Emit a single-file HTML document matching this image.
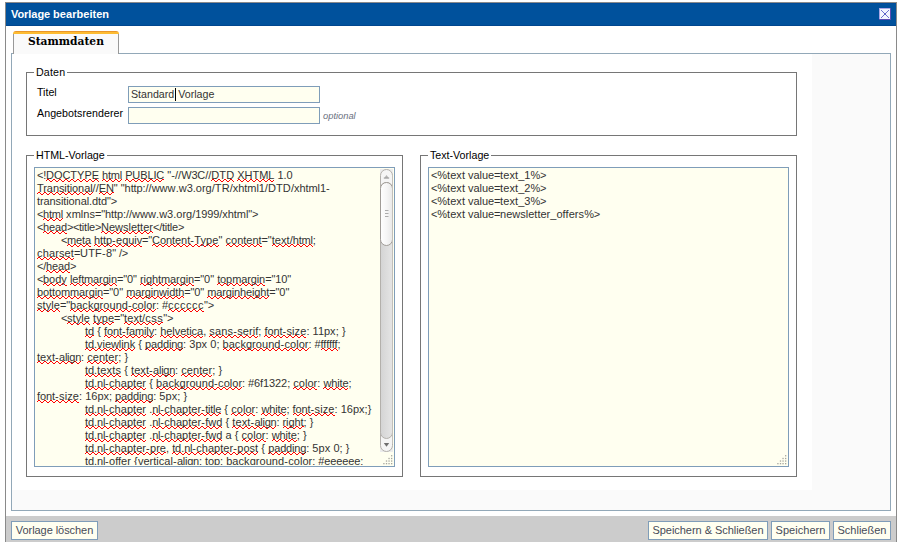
<!DOCTYPE html>
<html lang="de">
<head>
<meta charset="utf-8">
<title>Vorlage bearbeiten</title>
<style>
html,body{margin:0;padding:0;}
body{width:900px;height:542px;overflow:hidden;background:#fff;position:relative;
  font-family:"Liberation Sans",Arial,sans-serif;font-size:10.667px;color:#000;}
*{box-sizing:border-box;}
.abs{position:absolute;}
#win{left:5px;top:2px;width:892px;height:560px;border:1px solid #8a8a8a;background:#fff;}
#titlebar{left:6px;top:3px;width:890px;height:23px;background:#00519c;border-bottom:1px solid #00468f;border-top:1px solid #004b99;}
#title{left:11px;top:8px;height:13px;line-height:13px;color:#fff;font-weight:bold;font-size:11px;white-space:nowrap;}
#close{left:879px;top:8px;width:12px;height:12px;}
#panel{left:11px;top:53px;width:880px;height:458px;border:1px solid #92a8b8;background:#fafafa;}
#white{left:12px;top:54px;width:800px;height:436px;background:#fff;}
#tab{left:13px;top:34px;width:106px;height:20px;background:#fafafa;border-left:1px solid #999;border-right:1px solid #999;}
#tabtop{left:13px;top:31px;width:106px;height:3px;border-radius:3px 3px 0 0;background:linear-gradient(#e9962a 0,#e9962a 1px,#fdbc32 1px,#fdbc32 3px);}
#tabtxt{left:28px;top:34px;height:16px;line-height:16px;font-family:"DejaVu Serif","Liberation Serif",serif;font-weight:bold;font-size:10.667px;color:#000;white-space:nowrap;}
.fs{border:1px solid #767676;border-right-color:#767676;}
.legend{background:#fff;padding:0 2px;height:13px;line-height:13px;white-space:nowrap;color:#000;}
.lbl{height:13px;line-height:13px;white-space:nowrap;color:#000;}
.inp{border:1px solid #7f9db9;background:#fffff0;}
.ta{border:1px solid #7f9db9;background:#fffff0;overflow:hidden;}
.tatxt{left:2px;top:1px;line-height:13px;font-size:11px;color:#333;white-space:pre;tab-size:24px;-moz-tab-size:24px;}
.tatxt i{font-style:normal;}
.clip{left:0;top:0;height:297px;overflow:hidden;}
.tatxt u{text-decoration:none;padding-bottom:1px;
  background-image:linear-gradient(to right,transparent 1px,#f00 1px,#f00 3px,transparent 3px),linear-gradient(to right,#f00 1px,transparent 1px),linear-gradient(to right,transparent 4px,#f00 4px);
  background-size:6px 1px,3px 1px,6px 1px;background-repeat:repeat-x;
  background-position:0 calc(100% - 2px),0 calc(100% - 1px),0 100%;}
#bar{left:6px;top:516px;width:890px;height:40px;background:#ccc;}
.btn{top:521px;height:19px;border:1px solid #7f9db9;background:#fffff0;color:#464b58;line-height:17px;text-align:center;white-space:nowrap;font-size:11px;}
</style>
</head>
<body>
<div id="win" class="abs"></div>
<div id="titlebar" class="abs"></div>
<div id="title" class="abs"><span style="letter-spacing:-0.06px">Vorlage </span><span style="letter-spacing:0.036px">bearbeiten</span></div>
<svg id="close" class="abs" viewBox="0 0 12 12" width="12" height="12" shape-rendering="crispEdges">
  <rect x="0" y="0" width="12" height="12" fill="#5a4cb4"/>
  <rect x="0" y="0" width="11" height="11" fill="#aba7e4"/>
  <rect x="1" y="1" width="10" height="10" fill="#f2f6ff"/>
  <g fill="#6b74cf">
  <rect x="2" y="2" width="1" height="1"/><rect x="3" y="3" width="1" height="1"/><rect x="4" y="4" width="1" height="1"/><rect x="5" y="5" width="2" height="2" fill="#5a63c6"/><rect x="7" y="7" width="1" height="1"/><rect x="8" y="8" width="1" height="1"/><rect x="9" y="9" width="1" height="1"/>
  <rect x="9" y="2" width="1" height="1"/><rect x="8" y="3" width="1" height="1"/><rect x="7" y="4" width="1" height="1"/><rect x="4" y="7" width="1" height="1"/><rect x="3" y="8" width="1" height="1"/><rect x="2" y="9" width="1" height="1"/>
  </g>
</svg>

<div id="panel" class="abs"></div>
<div id="white" class="abs"></div>
<div id="tab" class="abs"></div><div id="tabtop" class="abs"></div>
<div id="tabtxt" class="abs">Stammdaten</div>

<!-- Daten fieldset -->
<div class="abs fs" style="left:26px;top:72px;width:771px;height:64px;"></div>
<div class="abs legend" style="left:34px;top:66px;letter-spacing:0.17px;">Daten</div>
<div class="abs lbl" style="left:37px;top:86px;">Titel</div>
<div class="abs lbl" style="left:37px;top:107px;letter-spacing:0.05px;">Angebotsrenderer</div>
<div class="abs inp" style="left:128px;top:86px;width:192px;height:17px;"><div class="abs lbl" style="left:2px;top:1px;color:#333;word-spacing:1px;">Standard Vorlage</div><div class="abs" style="left:46px;top:1px;width:1px;height:13px;background:#000;"></div></div>
<div class="abs inp" style="left:128px;top:107px;width:192px;height:17px;"></div>
<div class="abs" style="left:323px;top:110px;height:12px;line-height:12px;font-size:9.333px;font-style:italic;color:#6a7080;white-space:nowrap;">optional</div>

<!-- HTML-Vorlage fieldset -->
<div class="abs fs" style="left:26px;top:155px;width:377px;height:322px;"></div>
<div class="abs legend" style="left:34px;top:149px;">HTML-Vorlage</div>
<div class="abs ta" id="ta1" style="left:34px;top:167px;width:361px;height:300px;">
<div class="abs clip" style="width:345px;"><div class="abs tatxt" id="t1"><i style="letter-spacing:-0.240px">&lt;!</i><u><i style="letter-spacing:-0.025px">DOCTYPE</i></u> <u><i style="letter-spacing:-0.195px">html</i></u> <u><i style="letter-spacing:-0.123px">PUBLIC</i></u><i style="letter-spacing:0.053px"> "-//</i><i style="letter-spacing:-0.148px">W3C</i>//<u><i style="letter-spacing:0.131px">DTD</i></u> <u><i style="letter-spacing:-0.056px">XHTML</i></u> 1.0
<u><i style="letter-spacing:-0.072px">Transitional</i></u>//<u><i style="letter-spacing:-0.140px">EN</i></u>" "<i style="letter-spacing:-0.087px">http</i><i style="letter-spacing:-0.056px">://</i><i style="letter-spacing:0.056px">www</i>.w3.org/<i style="letter-spacing:0.168px">TR</i>/<i style="letter-spacing:-0.066px">xhtml1</i>/<i style="letter-spacing:0.131px">DTD</i>/<i style="letter-spacing:-0.066px">xhtml1</i><i style="letter-spacing:0.337px">-</i>
<i style="letter-spacing:-0.100px">transitional</i>.<i style="letter-spacing:-0.097px">dtd</i><i style="letter-spacing:-0.164px">"&gt;</i>
<i style="letter-spacing:-0.424px">&lt;</i><u><i style="letter-spacing:-0.195px">html</i></u> <i style="letter-spacing:0.055px">xmlns</i><i style="letter-spacing:-0.164px">="</i><i style="letter-spacing:-0.087px">http</i><i style="letter-spacing:-0.056px">://</i><i style="letter-spacing:0.056px">www</i>.w3.org/<i style="letter-spacing:-0.118px">1999</i>/<i style="letter-spacing:-0.056px">xhtml</i><i style="letter-spacing:-0.164px">"&gt;</i>
<i style="letter-spacing:-0.424px">&lt;</i><u><i style="letter-spacing:-0.118px">head</i></u><i style="letter-spacing:-0.424px">&gt;&lt;</i><i style="letter-spacing:-0.224px">title</i><i style="letter-spacing:-0.424px">&gt;</i><u>Newsletter</u><i style="letter-spacing:-0.240px">&lt;/</i><i style="letter-spacing:-0.224px">title</i><i style="letter-spacing:-0.424px">&gt;</i>
&#9;<i style="letter-spacing:-0.424px">&lt;</i><u><i style="letter-spacing:-0.114px">meta</i></u> <u><i style="letter-spacing:-0.087px">http</i><i style="letter-spacing:0.337px">-</i><i style="letter-spacing:-0.059px">equiv</i></u><i style="letter-spacing:-0.164px">="</i><u><i style="letter-spacing:-0.075px">Content</i><i style="letter-spacing:0.337px">-</i><i style="letter-spacing:0.136px">Type</i></u>" <u>content</u><i style="letter-spacing:-0.164px">="</i><u><i style="letter-spacing:0.068px">text</i>/<i style="letter-spacing:-0.195px">html</i></u>;
<u><i style="letter-spacing:0.133px">charset</i></u><i style="letter-spacing:-0.424px">=</i><i style="letter-spacing:0.206px">UTF</i><i style="letter-spacing:0.337px">-</i>8<i style="letter-spacing:-0.110px">" /&gt;</i>
<i style="letter-spacing:-0.240px">&lt;/</i><u><i style="letter-spacing:-0.118px">head</i></u><i style="letter-spacing:-0.424px">&gt;</i>
<i style="letter-spacing:-0.424px">&lt;</i><u>body</u> <u><i style="letter-spacing:-0.130px">leftmargin</i></u><i style="letter-spacing:-0.164px">="</i>0" <u><i style="letter-spacing:-0.093px">rightmargin</i></u><i style="letter-spacing:-0.164px">="</i>0" <u><i style="letter-spacing:-0.102px">topmargin</i></u><i style="letter-spacing:-0.164px">="</i><i style="letter-spacing:-0.118px">10</i>"
<u><i style="letter-spacing:-0.104px">bottommargin</i></u><i style="letter-spacing:-0.164px">="</i>0" <u><i style="letter-spacing:-0.118px">marginwidth</i></u><i style="letter-spacing:-0.164px">="</i>0" <u><i style="letter-spacing:-0.133px">marginheight</i></u><i style="letter-spacing:-0.164px">="</i>0"
<u><i style="letter-spacing:0.076px">style</i></u><i style="letter-spacing:-0.164px">="</i><u><i style="letter-spacing:0.051px">background</i><i style="letter-spacing:0.337px">-</i><i style="letter-spacing:0.032px">color</i></u><i style="letter-spacing:-0.077px">: #</i><u><i style="letter-spacing:0.500px">cccccc</i></u><i style="letter-spacing:-0.164px">"&gt;</i>
&#9;<i style="letter-spacing:-0.424px">&lt;</i><u><i style="letter-spacing:0.076px">style</i></u> <u><i style="letter-spacing:0.052px">type</i></u><i style="letter-spacing:-0.164px">="</i><u><i style="letter-spacing:0.068px">text</i>/<i style="letter-spacing:0.500px">css</i></u><i style="letter-spacing:-0.164px">"&gt;</i>
&#9;&#9;<u><i style="letter-spacing:-0.087px">td</i></u><i style="letter-spacing:0.071px"> { </i><u><i style="letter-spacing:-0.087px">font</i><i style="letter-spacing:0.337px">-</i><i style="letter-spacing:-0.121px">family</i></u>: <u><i style="letter-spacing:-0.046px">helvetica</i></u>, <u><i style="letter-spacing:0.191px">sans</i><i style="letter-spacing:0.337px">-</i><i style="letter-spacing:0.044px">serif</i></u>; <u><i style="letter-spacing:-0.087px">font</i><i style="letter-spacing:0.337px">-</i><i style="letter-spacing:0.110px">size</i></u>: 11px<i style="letter-spacing:0.071px">; }</i>
&#9;&#9;<u><i style="letter-spacing:-0.087px">td</i>.<i style="letter-spacing:-0.064px">viewlink</i></u><i style="letter-spacing:0.071px"> { </i><u><i style="letter-spacing:-0.164px">padding</i></u>: <i style="letter-spacing:0.088px">3px</i> 0; <u><i style="letter-spacing:0.051px">background</i><i style="letter-spacing:0.337px">-</i><i style="letter-spacing:0.032px">color</i></u><i style="letter-spacing:-0.077px">: #</i><u><i style="letter-spacing:-0.056px">ffffff</i></u>;
<u><i style="letter-spacing:0.068px">text</i><i style="letter-spacing:0.337px">-</i><i style="letter-spacing:-0.248px">align</i></u>: <u><i style="letter-spacing:0.071px">center</i></u><i style="letter-spacing:0.071px">; }</i>
&#9;&#9;<u><i style="letter-spacing:-0.087px">td</i>.<i style="letter-spacing:0.154px">texts</i></u><i style="letter-spacing:0.071px"> { </i><u><i style="letter-spacing:0.068px">text</i><i style="letter-spacing:0.337px">-</i><i style="letter-spacing:-0.248px">align</i></u>: <u><i style="letter-spacing:0.071px">center</i></u><i style="letter-spacing:0.071px">; }</i>
&#9;&#9;<u><i style="letter-spacing:-0.087px">td</i>.<i style="letter-spacing:-0.281px">nl</i><i style="letter-spacing:0.337px">-</i><i style="letter-spacing:0.044px">chapter</i></u><i style="letter-spacing:0.071px"> { </i><u><i style="letter-spacing:0.051px">background</i><i style="letter-spacing:0.337px">-</i><i style="letter-spacing:0.032px">color</i></u><i style="letter-spacing:-0.077px">: #</i><i style="letter-spacing:-0.107px">6f1322</i>; <u><i style="letter-spacing:0.032px">color</i></u>: <u><i style="letter-spacing:-0.136px">white</i></u>;
<u><i style="letter-spacing:-0.087px">font</i><i style="letter-spacing:0.337px">-</i><i style="letter-spacing:0.110px">size</i></u>: 16px; <u><i style="letter-spacing:-0.164px">padding</i></u>: <i style="letter-spacing:0.088px">5px</i><i style="letter-spacing:0.071px">; }</i>
&#9;&#9;<u><i style="letter-spacing:-0.087px">td</i>.<i style="letter-spacing:-0.281px">nl</i><i style="letter-spacing:0.337px">-</i><i style="letter-spacing:0.044px">chapter</i></u> .<u><i style="letter-spacing:-0.281px">nl</i><i style="letter-spacing:0.337px">-</i><i style="letter-spacing:0.044px">chapter</i><i style="letter-spacing:0.337px">-</i><i style="letter-spacing:-0.224px">title</i></u><i style="letter-spacing:0.071px"> { </i><u><i style="letter-spacing:0.032px">color</i></u>: <u><i style="letter-spacing:-0.136px">white</i></u>; <u><i style="letter-spacing:-0.087px">font</i><i style="letter-spacing:0.337px">-</i><i style="letter-spacing:0.110px">size</i></u>: 16px<i style="letter-spacing:0.135px">;}</i>
&#9;&#9;<u><i style="letter-spacing:-0.087px">td</i>.<i style="letter-spacing:-0.281px">nl</i><i style="letter-spacing:0.337px">-</i><i style="letter-spacing:0.044px">chapter</i></u> .<u><i style="letter-spacing:-0.281px">nl</i><i style="letter-spacing:0.337px">-</i><i style="letter-spacing:0.044px">chapter</i><i style="letter-spacing:0.337px">-</i>fwd</u><i style="letter-spacing:0.071px"> { </i><u><i style="letter-spacing:0.068px">text</i><i style="letter-spacing:0.337px">-</i><i style="letter-spacing:-0.248px">align</i></u>: <u><i style="letter-spacing:-0.080px">right</i></u><i style="letter-spacing:0.071px">; }</i>
&#9;&#9;<u><i style="letter-spacing:-0.087px">td</i>.<i style="letter-spacing:-0.281px">nl</i><i style="letter-spacing:0.337px">-</i><i style="letter-spacing:0.044px">chapter</i></u> .<u><i style="letter-spacing:-0.281px">nl</i><i style="letter-spacing:0.337px">-</i><i style="letter-spacing:0.044px">chapter</i><i style="letter-spacing:0.337px">-</i>fwd</u> a<i style="letter-spacing:0.071px"> { </i><u><i style="letter-spacing:0.032px">color</i></u>: <u><i style="letter-spacing:-0.136px">white</i></u><i style="letter-spacing:0.071px">; }</i>
&#9;&#9;<u><i style="letter-spacing:-0.087px">td</i>.<i style="letter-spacing:-0.281px">nl</i><i style="letter-spacing:0.337px">-</i><i style="letter-spacing:0.044px">chapter</i><i style="letter-spacing:0.337px">-</i>pre</u>, <u><i style="letter-spacing:-0.087px">td</i>.<i style="letter-spacing:-0.281px">nl</i><i style="letter-spacing:0.337px">-</i><i style="letter-spacing:0.044px">chapter</i><i style="letter-spacing:0.337px">-</i><i style="letter-spacing:0.052px">post</i></u><i style="letter-spacing:0.071px"> { </i><u><i style="letter-spacing:-0.164px">padding</i></u>: <i style="letter-spacing:0.088px">5px</i> 0<i style="letter-spacing:0.071px">; }</i>
&#9;&#9;<u><i style="letter-spacing:-0.087px">td</i>.<i style="letter-spacing:-0.281px">nl</i><i style="letter-spacing:0.337px">-</i>offer</u><i style="letter-spacing:0.135px"> {</i><u><i style="letter-spacing:0.020px">vertical</i><i style="letter-spacing:0.337px">-</i><i style="letter-spacing:-0.248px">align</i></u>: <i style="letter-spacing:-0.097px">top</i>; <u><i style="letter-spacing:0.051px">background</i><i style="letter-spacing:0.337px">-</i><i style="letter-spacing:0.032px">color</i></u><i style="letter-spacing:-0.077px">: #</i><u><i style="letter-spacing:-0.118px">eeeeee</i></u>;</div></div>
<svg class="abs" style="left:345px;top:0px;" width="13" height="284" viewBox="0 0 13 284">
<defs>
<linearGradient id="gt" x1="0" y1="0" x2="1" y2="0"><stop offset="0" stop-color="#d4d4d4"/><stop offset="1" stop-color="#e5e5e5"/></linearGradient>
<linearGradient id="gh" x1="0" y1="0" x2="1" y2="0"><stop offset="0" stop-color="#ffffff"/><stop offset="0.5" stop-color="#f6f6f6"/><stop offset="1" stop-color="#e9e9e9"/></linearGradient>
</defs>
<rect x="0" y="1" width="13" height="283" fill="#ececec"/>
<rect x="0.5" y="1.5" width="12" height="282" rx="6" ry="6" fill="#f5f5f5" stroke="#b3b0ab"/>
<rect x="0.5" y="14.5" width="12" height="256" rx="6" ry="6" fill="url(#gt)" stroke="#b3b0ab"/>
<rect x="0.5" y="14.5" width="12" height="63" rx="6" ry="6" fill="url(#gh)" stroke="#a09c97"/>
<path d="M3.8 10.4 L9.2 10.4 L6.5 7 Z" fill="#b4b4b4"/><path d="M3.8 10 H9.2" stroke="#9a9a9a" stroke-width="0.8"/>
<path d="M3.8 275 L9.2 275 L6.5 278.7 Z" fill="#6f6f6f"/>
<path d="M12.5 8V276" stroke="#c2bfba" stroke-width="1"/>
<path d="M5 42.5H8.5M5 45.5H8.5M5 48.5H8.5" stroke="#acacac" stroke-width="1"/>
</svg>
<svg class="abs" style="left:346px;top:285px;" width="14" height="14" viewBox="0 0 14 14"><g fill="#6a6a6a" fill-opacity="0.6">
<rect x="10" y="2.1" width="1.3" height="1.3"/>
<rect x="7.4" y="4.85" width="1.3" height="1.3"/><rect x="10" y="4.85" width="1.3" height="1.3"/>
<rect x="4.85" y="7.4" width="1.3" height="1.3"/><rect x="7.4" y="7.4" width="1.3" height="1.3"/><rect x="10" y="7.4" width="1.3" height="1.3"/>
<rect x="2.25" y="10" width="1.3" height="1.3"/><rect x="4.85" y="10" width="1.3" height="1.3"/><rect x="7.4" y="10" width="1.3" height="1.3"/><rect x="10" y="10" width="1.3" height="1.3"/>
</g></svg>
</div>

<!-- Text-Vorlage fieldset -->
<div class="abs fs" style="left:420px;top:155px;width:377px;height:322px;"></div>
<div class="abs legend" style="left:428px;top:149px;">Text-Vorlage</div>
<div class="abs ta" id="ta2" style="left:428px;top:167px;width:361px;height:300px;">
<div class="abs clip" style="width:359px;"><div class="abs tatxt" id="t2"><i style="letter-spacing:-0.102px">&lt;%</i><i style="letter-spacing:0.068px">text</i> <i style="letter-spacing:-0.059px">value</i><i style="letter-spacing:-0.424px">=</i><i style="letter-spacing:0.068px">text</i>_1<i style="letter-spacing:-0.102px">%&gt;</i>
<i style="letter-spacing:-0.102px">&lt;%</i><i style="letter-spacing:0.068px">text</i> <i style="letter-spacing:-0.059px">value</i><i style="letter-spacing:-0.424px">=</i><i style="letter-spacing:0.068px">text</i>_2<i style="letter-spacing:-0.102px">%&gt;</i>
<i style="letter-spacing:-0.102px">&lt;%</i><i style="letter-spacing:0.068px">text</i> <i style="letter-spacing:-0.059px">value</i><i style="letter-spacing:-0.424px">=</i><i style="letter-spacing:0.068px">text</i>_3<i style="letter-spacing:-0.102px">%&gt;</i>
<i style="letter-spacing:-0.102px">&lt;%</i><i style="letter-spacing:0.068px">text</i> <i style="letter-spacing:-0.059px">value</i><i style="letter-spacing:-0.424px">=</i>newsletter_<i style="letter-spacing:0.082px">offers</i><i style="letter-spacing:-0.102px">%&gt;</i></div></div>
<svg class="abs" style="left:346px;top:285px;" width="14" height="14" viewBox="0 0 14 14"><g fill="#6a6a6a" fill-opacity="0.6">
<rect x="10" y="2.1" width="1.3" height="1.3"/>
<rect x="7.4" y="4.85" width="1.3" height="1.3"/><rect x="10" y="4.85" width="1.3" height="1.3"/>
<rect x="4.85" y="7.4" width="1.3" height="1.3"/><rect x="7.4" y="7.4" width="1.3" height="1.3"/><rect x="10" y="7.4" width="1.3" height="1.3"/>
<rect x="2.25" y="10" width="1.3" height="1.3"/><rect x="4.85" y="10" width="1.3" height="1.3"/><rect x="7.4" y="10" width="1.3" height="1.3"/><rect x="10" y="10" width="1.3" height="1.3"/>
</g></svg>
</div>

<!-- bottom bar -->
<div id="bar" class="abs"></div>
<div class="abs btn" style="left:11px;width:87px;letter-spacing:-0.059px;">Vorlage löschen</div>
<div class="abs btn" style="left:648px;width:120px;letter-spacing:-0.04px;">Speichern &amp; Schließen</div>
<div class="abs btn" style="left:771px;width:59px;letter-spacing:0.05px;">Speichern</div>
<div class="abs btn" style="left:833px;width:58px;">Schließen</div>
</body>
</html>
